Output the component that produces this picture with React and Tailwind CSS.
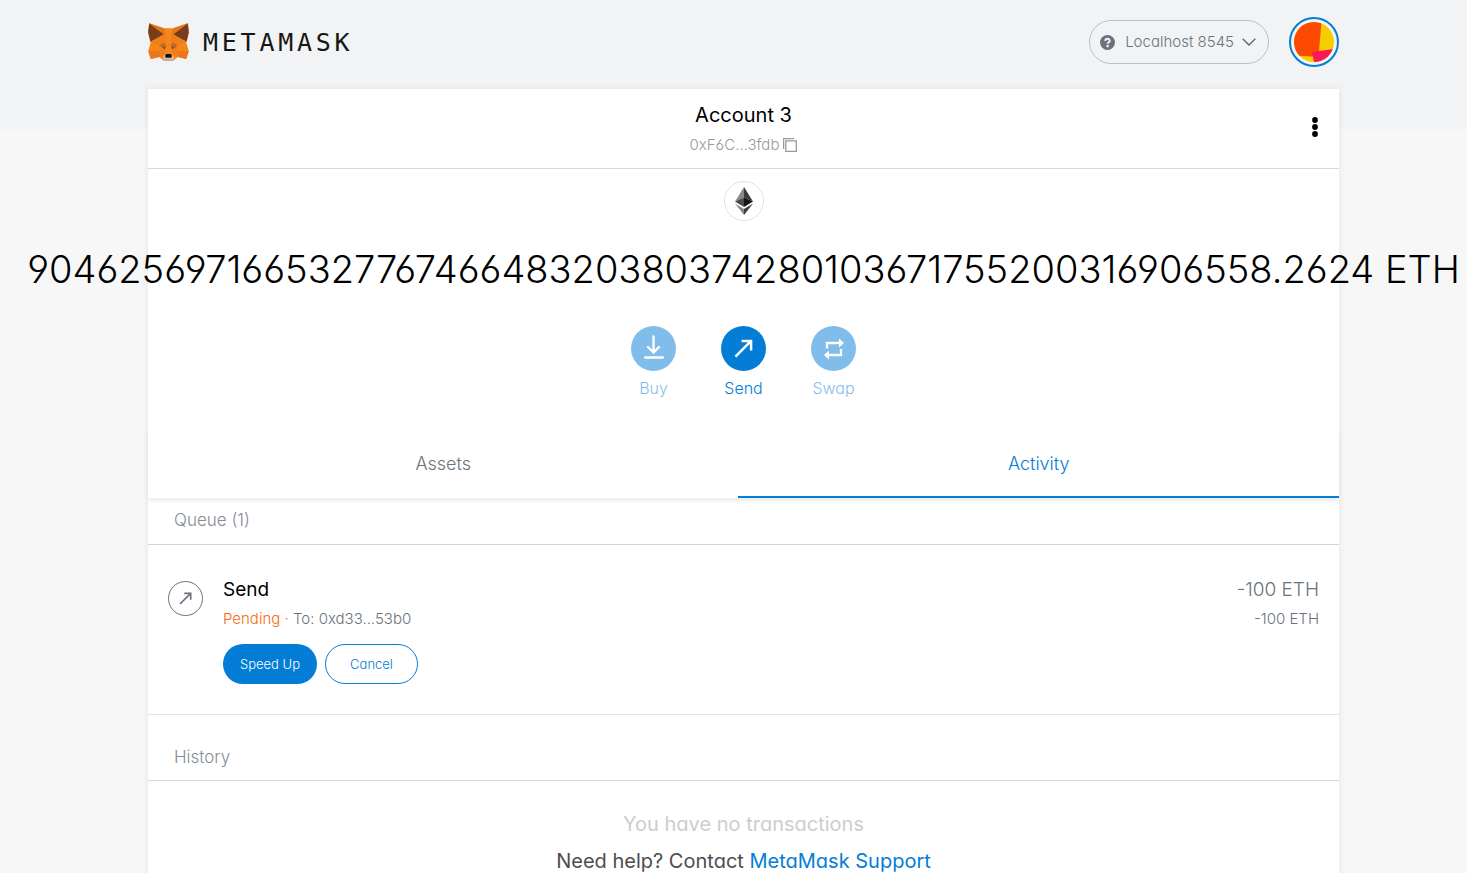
import React from 'react';

function FoxLogo() {
  return (
    <svg width="41" height="38" viewBox="11 14 122 114" aria-hidden="true" className="shrink-0">
      <path d="M14 15 58 30H86L130 15 133 42 127 70 125 72 133 98 125 122 100 116 86 127H58L44 116 19 122 11 98 19 72 17 70 11 42Z" fill="#f6851b" />
      <path d="M14 15 58 48 44 56 18 70 11 42Z" fill="#763e1a" />
      <path d="M130 15 86 48 100 56 126 70 133 42Z" fill="#763e1a" />
      <path d="M14 15 58 30 63 52 58 48ZM130 15 86 30 81 52 86 48Z" fill="#e2761b" />
      <path d="M18 70 44 56 58 48 63 52 66 78 44 82ZM126 70 100 56 86 48 81 52 78 78 100 82Z" fill="#ee7f1d" />
      <path d="M44 82 56 74 66 79 66 82ZM100 82 88 74 78 79 78 82Z" fill="#cd6116" />
      <path d="M44 82 66 82 62 93 52 89ZM100 82 78 82 82 93 92 89Z" fill="#d8661a" />
      <path d="M52 84 61 86 62 91 55 89ZM92 84 83 86 82 91 89 89Z" fill="#233447" />
      <path d="M54 85H58V88H54ZM86 85H90V88H86Z" fill="#a7aeb5" />
      <path d="M11 98H42L44 116 19 122ZM133 98H102L100 116 125 122Z" fill="#e9771c" />
      <path d="M42 98 52 89 62 93 62 108 44 116ZM102 98 92 89 82 93 82 108 100 116Z" fill="#ef7d1b" />
      <path d="M58 113 62 108H82L86 113 88 122 84 127H60L56 122Z" fill="#d7c1b3" />
      <path d="M58 122H86V127H58Z" fill="#c0ad9e" />
      <path d="M65 107H79L82 110 81 118H63L62 110Z" fill="#161616" />
    </svg>
  );
}

function ArrowUpRight({ className, size }) {
  return (
    <svg width={size} height={size} viewBox="0 0 20 20" fill="none" stroke="currentColor" strokeWidth="2.6" className={className} aria-hidden="true">
      <path d="M1.5 18.5 18 2M8 2H18V12" />
    </svg>
  );
}

function Action({ label, disabled, children }) {
  return (
    <button type="button" disabled={disabled} className={disabled ? 'flex w-[90px] flex-col items-center gap-[7px] text-[#037dd6] opacity-50' : 'flex w-[90px] flex-col items-center gap-[7px] text-[#037dd6]'}>
      <span className="flex size-[45px] items-center justify-center rounded-full bg-[#037dd6] text-white">{children}</span>
      <span className="text-[16px] leading-5">{label}</span>
    </button>
  );
}

function Header() {
  return (
    <header className="flex h-[89px] items-center justify-between pb-[5px]">
      <a href="#home" aria-label="MetaMask" className="flex items-center gap-[14px]">
        <FoxLogo />
        <span className="pt-[2px] font-['DejaVu_Sans_Mono',monospace] text-[25px] leading-8 tracking-[0.15em] text-[#161616]">METAMASK</span>
      </a>
      <div className="flex items-center gap-5">
        <button type="button" className="flex h-11 items-center rounded-full border border-[#bbc0c5] pr-3 pl-[10px] text-[15px] text-[#6a737d]">
          <svg width="15" height="15" viewBox="0 0 15 15" aria-hidden="true">
            <circle cx="7.5" cy="7.5" r="7.5" fill="#6a737d" />
            <path d="M5.2 5.900C5.400 3.100 9.700 3.200 9.700 5.700 9.700 7.200 7.600 7.200 7.600 8.800" fill="none" stroke="#f2f3f4" strokeWidth="2" />
            <circle cx="7.6" cy="11.1" r="1.3" fill="#f2f3f4" />
          </svg>
          <span className="pr-2 pl-[10px]">Localhost 8545</span>
          <svg width="14" height="8" viewBox="0 0 14 8" fill="none" stroke="#5d6368" strokeWidth="1.3" aria-hidden="true">
            <path d="M.7.8 7 7 13.3.8" />
          </svg>
        </button>
        <button type="button" aria-label="Accounts" className="flex size-[50px] items-center justify-center rounded-full border-2 border-[#037dd6]">
          <svg width="40" height="40" viewBox="0 0 40 40" aria-hidden="true">
            <defs>
              <clipPath id="identicon"><circle cx="20" cy="20" r="20" /></clipPath>
            </defs>
            <g clipPath="url(#identicon)">
              <rect width="40" height="40" fill="#f6cd00" />
              <path d="M0 0H27.500L25 29V35L0 33.500Z" fill="#fc4a02" />
              <path d="M18 30 40 27V40H20Z" fill="#fb1856" />
            </g>
          </svg>
        </button>
      </div>
    </header>
  );
}

export default function App() {
  return (
    <div className="h-screen overflow-hidden bg-[#f7f7f7] bg-linear-to-b from-[#f2f3f4] from-[129px] to-[#f7f7f7] to-[129px] font-['Inter',sans-serif] font-light text-black [font-feature-settings:'cv03','cv04','cv11']">
      <div className="ml-[148px] mr-32">
        <Header />
        <main className="bg-white shadow-[0_0_7px_rgba(0,0,0,0.08)]">
          <div className="grid h-20 grid-cols-[1fr_auto_1fr] items-center border-b border-[#d6d9dc] px-5">
            <button type="button" className="col-start-2 flex flex-col items-center gap-2">
              <span className="text-[20px] leading-6 font-normal">Account 3</span>
              <span className="flex items-center gap-1 text-[15px] leading-5 text-[#989a9b]">
                0xF6C...3fdb
                <svg width="14" height="14" viewBox="0 0 14 14" fill="none" stroke="#989a9b" strokeWidth="1.300" aria-hidden="true">
                  <path d="M.6 11V.6H11M2.800 2.800H13.300V13.300H2.800Z" />
                </svg>
              </span>
            </button>
            <button type="button" aria-label="Account options" className="justify-self-end pb-1">
              <svg width="8" height="20" viewBox="0 0 8 20" aria-hidden="true">
                <circle cx="4" cy="3" r="2.900" /><circle cx="4" cy="10" r="2.900" /><circle cx="4" cy="17" r="2.900" />
              </svg>
            </button>
          </div>

          <section className="flex flex-col items-center pt-3">
            <div className="flex size-10 items-center justify-center rounded-full border border-[#dfe1e3]">
              <svg width="18" height="28" viewBox="0 0 18 28" aria-hidden="true">
                <path d="M9 0 0 14.500 9 10.500Z" fill="#8a8a8a" />
                <path d="M9 0 18 14.500 9 10.500Z" fill="#3c3c3b" />
                <path d="M0 14.500 9 10.500V20Z" fill="#4a4a4a" />
                <path d="M18 14.500 9 10.500V20Z" fill="#141414" />
                <path d="M0 16.500 9 22V28Z" fill="#8a8a8a" />
                <path d="M18 16.500 9 22V28Z" fill="#3c3c3b" />
              </svg>
            </div>
            <p className="mt-6 whitespace-nowrap text-[38px] leading-12">904625697166532776746648320380374280103671755200316906558.2624 ETH</p>
            <div className="mt-[33px] flex">
              <Action label="Buy" disabled>
                <svg width="20" height="24" viewBox="0 0 20 24" fill="none" stroke="currentColor" strokeWidth="2.400" strokeLinecap="round" className="mb-1" aria-hidden="true">
                  <path d="M9.500 1.500V17M4 12 9.500 17.500 15 12M1.200 22.500H18.800" />
                </svg>
              </Action>
              <Action label="Send"><ArrowUpRight size={19} /></Action>
              <Action label="Swap" disabled>
                <svg width="20" height="22" viewBox="0 0 20 22" fill="none" stroke="currentColor" strokeWidth="2.300" aria-hidden="true">
                  <path d="M3 10.500V5H16M17 11V17H4" />
                  <path d="M15 .5 20 5 15 9.500ZM5 12.500 0 17 5 21.500Z" fill="currentColor" stroke="none" />
                </svg>
              </Action>
            </div>
          </section>

          <div role="tablist" className="mt-[33px] grid grid-cols-[59fr_60fr] text-[18px] leading-6 text-[#6a737d] shadow-[0_3px_4px_rgba(0,0,0,0.08)]">
            <button type="button" role="tab" aria-selected="false" className="h-[67px] border-b-2 border-transparent">Assets</button>
            <button type="button" role="tab" aria-selected="true" className="h-[67px] border-b-2 border-[#037dd6] text-[#037dd6]">Activity</button>
          </div>

          <section>
            <h2 className="h-[47px] border-b border-[#d2d5d8] px-[26px] pt-[10px] text-[17px] leading-6 text-[#848c96]">Queue (1)</h2>
            <div className="flex items-start border-b border-[#e1e4e7] px-5 pt-8 pb-[30px]">
              <span className="mt-1 flex size-[35px] items-center justify-center rounded-full border border-[#6a737d] text-[#6a737d]"><ArrowUpRight size={13} /></span>
              <div className="ml-5 flex-1">
                <h3 className="text-[19px] leading-[26px] font-normal">Send</h3>
                <p className="mt-[6px] text-[15px] leading-5 text-[#6a737d]"><span className="text-[#f66a0a]">Pending · </span>To: 0xd33...53b0</p>
                <div className="mt-[15px] flex gap-2 text-[13px] leading-4">
                  <button type="button" className="h-10 w-[94px] rounded-full bg-[#037dd6] text-white">Speed Up</button>
                  <button type="button" className="h-10 w-[93px] rounded-full border border-[#037dd6] text-[#037dd6]">Cancel</button>
                </div>
              </div>
              <div className="text-right text-[#6a737d]">
                <p className="text-[19px] leading-[26px]">-100 ETH</p>
                <p className="mt-[6px] text-[15px] leading-5">-100 ETH</p>
              </div>
            </div>
          </section>

          <section>
            <h2 className="h-[66px] border-b border-[#d6d9dc] px-[26px] pt-[30px] text-[17px] leading-6 text-[#848c96]">History</h2>
            <p className="pt-[31px] text-center text-[20px] leading-6 font-normal text-[#cdcdcd]">You have no transactions</p>
            <p className="mt-[13px] pb-8 text-center text-[20px] leading-6 font-normal text-[#4d4d4d]">Need help? Contact <a href="#support" className="text-[#037dd6]">MetaMask Support</a></p>
          </section>
        </main>
      </div>
    </div>
  );
}
